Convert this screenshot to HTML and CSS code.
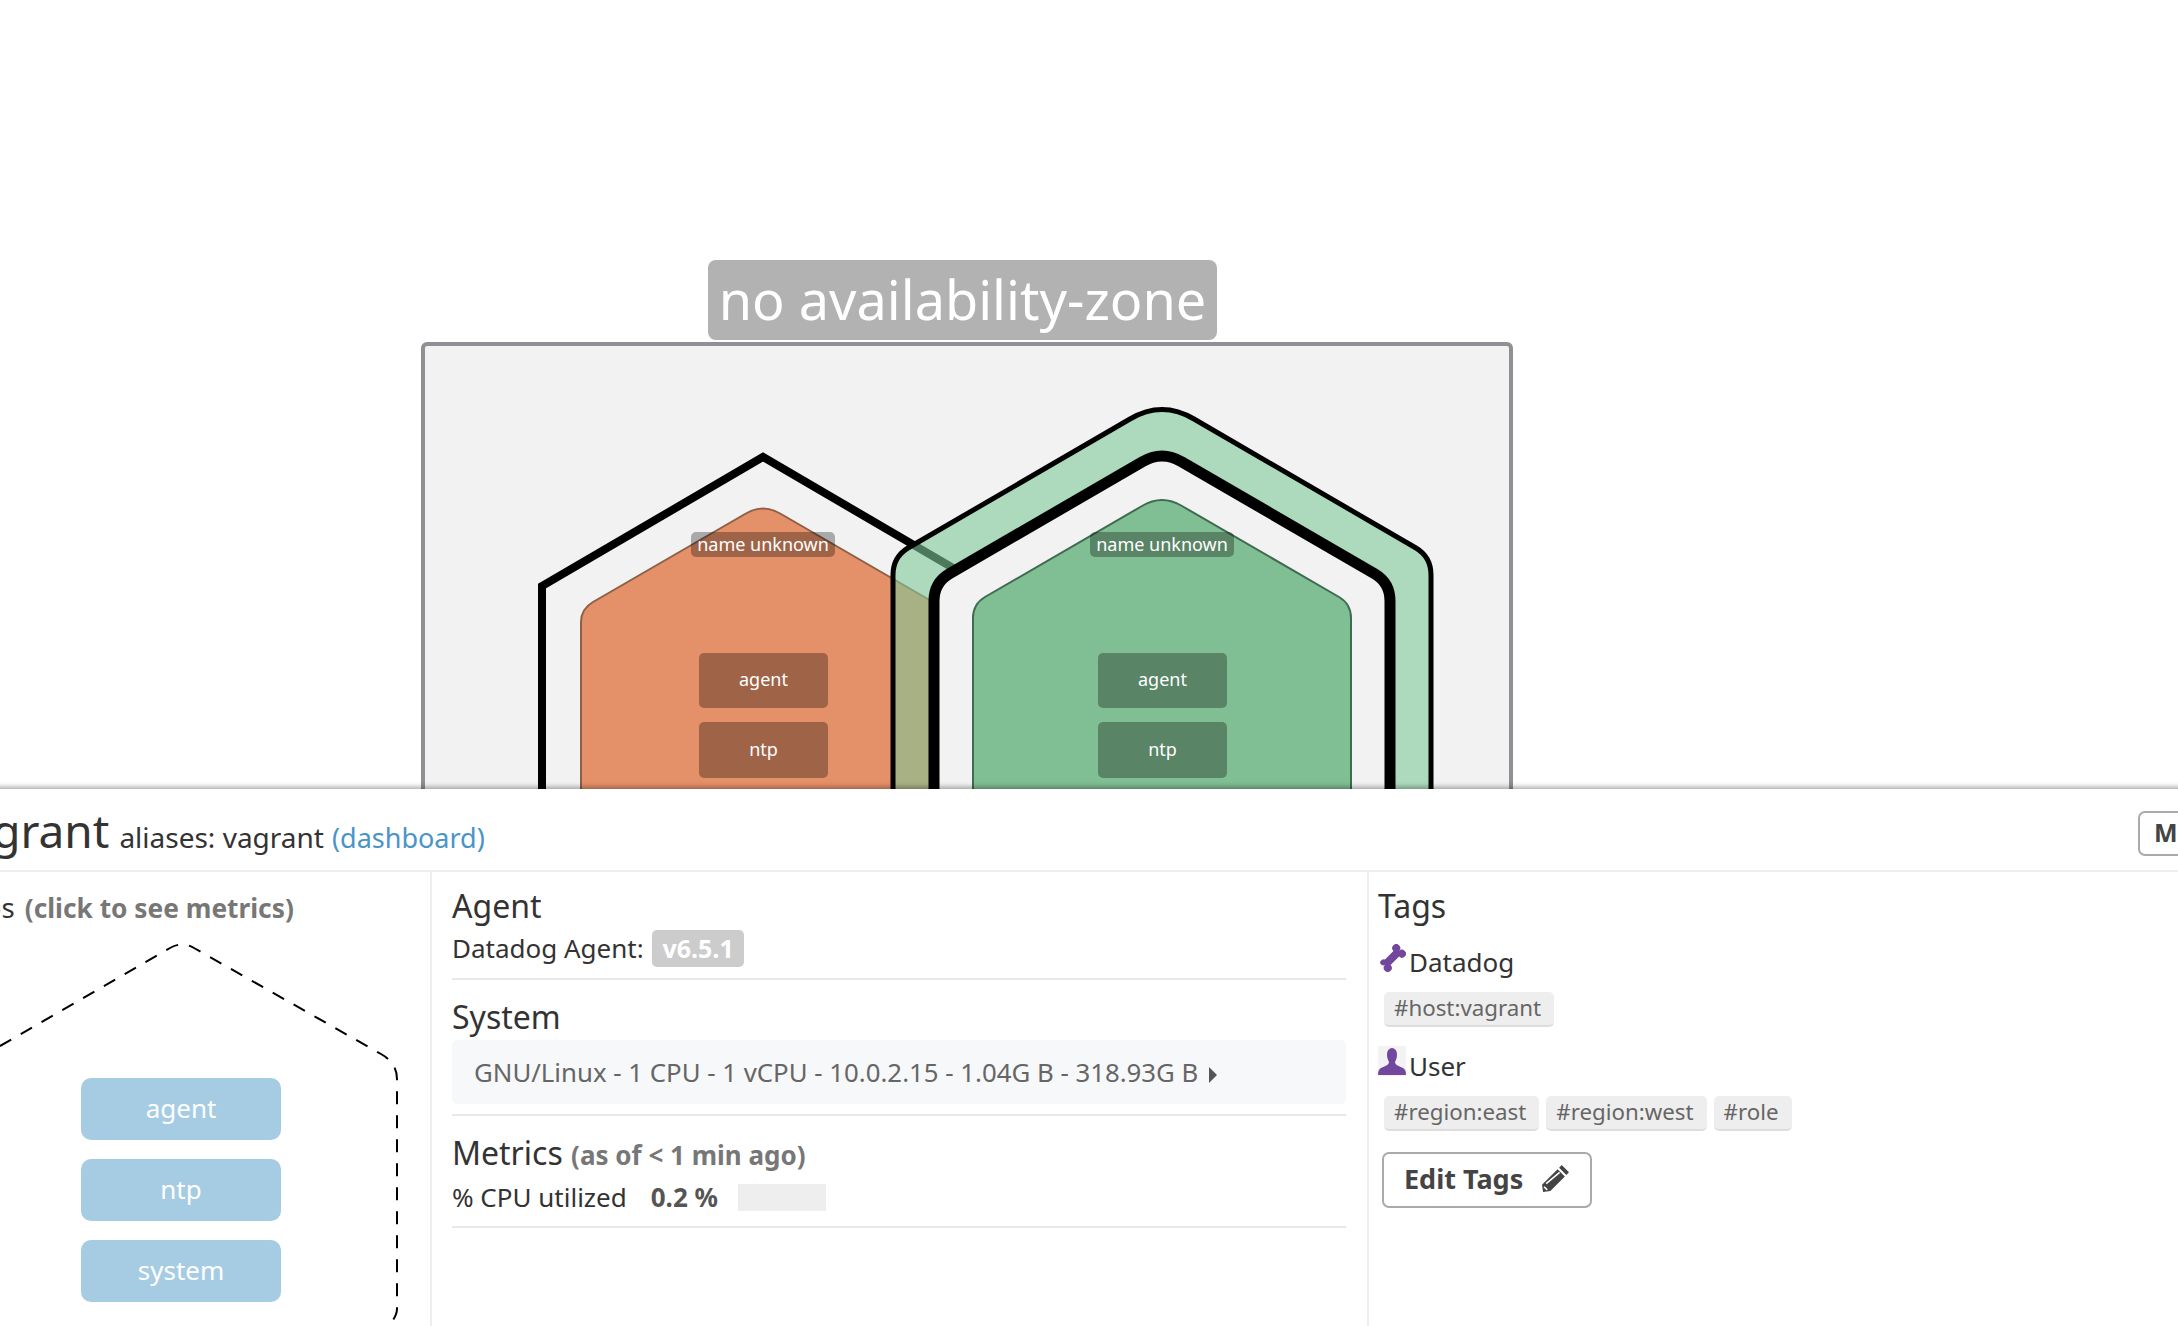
FILE: index.html
```html
<!DOCTYPE html>
<html lang="en">
<head>
    <meta charset="UTF-8">
    <title>Host Map</title>
    <link rel="stylesheet" href="styles.css">
</head>
<body>

    <div class="map">
        <div class="zone-label">no availability-zone</div>
        <div class="zone"></div>

        <svg class="hexes" width="2178" height="800" viewBox="0 0 2178 800">
            <!-- orange host, plain outline -->
            <path class="outline" d="M542 800 V586 L763 457 L984 586 V800"/>
            <path class="fill-orange" d="M581 800 V622 Q581 609 593 602 L745 514 Q763 503 781 514 L933 602 Q945 609 945 622 V800"/>
            <!-- green host, selected -->
            <path class="band" d="M893 800 V575 Q893 557 908 548 L1130 419 Q1162 400 1194 419 L1416 548 Q1431 557 1431 575 V800"/>
            <path class="inner" d="M934 800 V601 Q934 583 949 574 L1142 462 Q1162 450 1182 462 L1375 574 Q1390 583 1390 601 V800"/>
            <path class="fill-green" d="M973 800 V618 Q973 604 985 597 L1142 506 Q1162 494 1182 506 L1339 597 Q1351 604 1351 618 V800"/>
        </svg>

        <div class="host-name host-orange">name unknown</div>
        <div class="app app-one host-orange">agent</div>
        <div class="app app-two host-orange">ntp</div>
        <div class="host-name host-green">name unknown</div>
        <div class="app app-one host-green">agent</div>
        <div class="app app-two host-green">ntp</div>
    </div>

    <div class="panel">
        <div class="panel-header">
            <span class="hostname">vagrant</span>
            <span class="aliases">aliases: vagrant</span>
            <a class="dash-link" href="#">(dashboard)</a>
            <button class="btn btn-mute">Mute Host</button>
        </div>

        <div class="columns">
            <div class="col col-apps">
                <div class="apps-title">Apps <span class="muted">(click to see metrics)</span></div>
                <div class="app-hex">
                    <svg class="app-hex-line" width="432" height="400" viewBox="0 0 432 400">
                        <path d="M1 400 V126 L204 9 Q216 2 228 9 L415 115 Q431 124 431 140 V370 Q431 378 420 390 L405 404"/>
                    </svg>
                    <div class="app-list">
                        <div class="app-big">agent</div>
                        <div class="app-big">ntp</div>
                        <div class="app-big">system</div>
                    </div>
                </div>
            </div>

            <div class="col col-info">
                <section class="info-block block-agent">
                    <h3>Agent</h3>
                    <div class="line">Datadog Agent: <span class="version">v6.5.1</span></div>
                </section>
                <section class="info-block block-system">
                    <h3>System</h3>
                    <div class="sys-box">GNU/Linux - 1 CPU - 1 vCPU - 10.0.2.15 - 1.04G B - 318.93G B <span class="caret"></span></div>
                </section>
                <section class="info-block block-metrics">
                    <h3>Metrics <span class="muted">(as of &lt; 1 min ago)</span></h3>
                    <div class="line metric-line">
                        <span>% CPU utilized</span>
                        <b class="metric-value">0.2 %</b>
                        <span class="metric-bar"></span>
                    </div>
                </section>
            </div>

            <div class="col col-tags">
                <h3>Tags</h3>
                <div class="tag-source source-datadog">
                    <svg width="28" height="28" viewBox="0 0 28 28"><g transform="rotate(-45 14 14)"><path class="purple" d="M2 9 a4 4 0 0 1 6 1 h12 a4 4 0 1 1 4 4 a4 4 0 1 1 -4 4 h-12 a4 4 0 1 1 -4 -4 a4 4 0 0 1 -2 -5z"/></g></svg>
                    <span>Datadog</span>
                </div>
                <div class="tag-row">
                    <span class="tag">#host:vagrant</span>
                </div>
                <div class="tag-source source-user">
                    <svg class="user-icon" width="28" height="30" viewBox="0 0 28 30"><path class="purple" d="M9 8 a5 6 0 0 1 10 0 c0 4 -1 6 -2 8 c0 3 4 4 8 6 c2 1 3 3 3 7 h-28 c0 -4 1 -6 3 -7 c4 -2 8 -3 8 -6 c-1 -2 -2 -4 -2 -8z"/></svg>
                    <span>User</span>
                </div>
                <div class="tag-row">
                    <span class="tag">#region:east</span>
                    <span class="tag">#region:west</span>
                    <span class="tag">#role</span>
                </div>
                <button class="btn btn-edit">Edit Tags
                    <svg width="29" height="29" viewBox="0 0 28 28"><path class="pencil" d="M20 1 L27 8 L24.500 10.500 L17.500 3.500z M16 5 L23 12 L9 26 L2 27 L1 20z"/><path class="pencil-cut" d="M5 19 L18 8 M3 22 L6 25" /></svg>
                </button>
            </div>
        </div>
    </div>

</body>
</html>
```
FILE: styles.css
```css
html, body {
    margin: 0;
    height: 1326px;
    overflow: hidden;
    background: white;
    font-family: "Noto Sans", sans-serif;
    color: #333;
}

/* host map */
.map {
    position: relative;
    height: 789px;
    overflow: hidden;
}
.zone-label {
    position: absolute;
    left: 708px;
    top: 260px;
    width: 509px;
    height: 80px;
    line-height: 78px;
    text-align: center;
    font-size: 54px;
    color: white;
    background: #b2b2b2;
    border-radius: 8px;
}
.zone {
    position: absolute;
    left: 421px;
    top: 342px;
    width: 1084px;
    height: 460px;
    background: #f2f2f2;
    border: 4px solid #8f8f94;
    border-radius: 6px;
}
.hexes {
    position: absolute;
    left: 0;
    top: 0;
}
.outline {
    fill: none;
    stroke: black;
    stroke-width: 8;
}
.fill-orange {
    fill: #e49068;
    stroke: #8d5f48;
    stroke-width: 2;
}
.band {
    fill: #7ec897;
    fill-opacity: 0.6;
    stroke: black;
    stroke-width: 5;
}
.inner {
    fill: #f2f2f2;
    stroke: black;
    stroke-width: 11;
}
.fill-green {
    fill: #80be93;
    stroke: #3f6b50;
    stroke-width: 2;
}
.host-name {
    position: absolute;
    top: 532px;
    width: 144px;
    height: 25px;
    line-height: 25px;
    text-align: center;
    font-size: 18px;
    color: white;
    background: rgba(0, 0, 0, 0.3);
    border-radius: 5px;
}
.app {
    position: absolute;
    width: 129px;
    text-align: center;
    font-size: 18px;
    color: white;
    background: rgba(0, 0, 0, 0.3);
    border-radius: 5px;
}
.app-one {
    top: 653px;
    height: 55px;
    line-height: 53px;
}
.app-two {
    top: 722px;
    height: 56px;
    line-height: 54px;
}
.host-name.host-orange { left: 691px; }
.host-name.host-green { left: 1090px; }
.app.host-orange { left: 699px; }
.app.host-green { left: 1098px; }

/* bottom panel */
.panel {
    position: relative;
    margin: 0 -200px 0 -100px;
    height: 537px;
    background: white;
    box-shadow: 0 -2px 5px rgba(0, 0, 0, 0.35);
}
.panel-header {
    display: flex;
    align-items: baseline;
    height: 70px;
    padding-top: 11px;
    border-bottom: 2px solid #eee;
    padding-left: 43px;
}
.hostname {
    font-size: 46px;
    line-height: 60px;
    margin-right: 10px;
}
.aliases {
    font-size: 28px;
    margin-right: 8px;
}
.dash-link {
    font-size: 27px;
    color: #4a94c9;
    text-decoration: none;
}
.btn {
    font-family: inherit;
    font-weight: bold;
    color: #444;
    background: white;
    border: 2px solid #aaa;
    border-radius: 7px;
}
.btn-mute {
    align-self: flex-start;
    margin: 11px 0 0 auto;
    width: 240px;
    height: 45px;
    font-size: 25px;
    line-height: 36px;
    text-align: left;
    padding: 0 14px 3px;
}

.columns {
    display: flex;
    height: 455px;
}
.col {
    box-sizing: border-box;
    border-right: 2px solid #eee;
}
.col-apps {
    width: 532px;
    padding-top: 17px;
    padding-left: 50px;
}
.col-info {
    width: 937px;
    padding: 0 21px 0 20px;
}
.col-tags {
    border-right: none;
    padding: 0 0 0 9px;
}

h3 {
    margin: 0;
    font-size: 32px;
    font-weight: normal;
    line-height: 44px;
}
.muted {
    font-size: 26px;
    font-weight: bold;
    color: #777;
}
.apps-title {
    font-size: 27.500px;
    line-height: 38px;
    white-space: nowrap;
}
.apps-title .muted {
    margin-left: 3px;
    font-size: 26.300px;
}

.app-hex {
    position: relative;
    margin-left: 15px;
    height: 400px;
}
.app-hex-line {
    position: absolute;
    left: 1px;
    top: 12px;
    overflow: visible;
}
.app-hex-line path {
    fill: none;
    stroke: black;
    stroke-width: 2;
    stroke-dasharray: 13 11;
}
.app-list {
    display: flex;
    flex-direction: column;
    gap: 19px;
    width: 200px;
    margin-left: 116px;
    padding-top: 151px;
}
.app-big {
    height: 62px;
    line-height: 60px;
    text-align: center;
    font-size: 26px;
    color: white;
    background: #a5cce3;
    border-radius: 10px;
}

.info-block {
    border-bottom: 2px solid #e8e8e8;
}
.block-agent {
    padding-top: 12px;
    height: 94px;
}
.block-system {
    padding-top: 15px;
    height: 119px;
}
.block-metrics {
    padding-top: 15px;
    height: 95px;
}
.line {
    font-size: 26px;
    line-height: 40px;
}
.version {
    display: inline-block;
    padding: 0 10px;
    height: 37px;
    line-height: 37px;
    font-size: 25px;
    font-weight: bold;
    color: white;
    background: #ccc;
    border-radius: 5px;
    margin-left: 2px;
}
.sys-box {
    margin-top: 1px;
    height: 64px;
    line-height: 64px;
    padding-left: 22px;
    font-size: 25.800px;
    color: #666;
    background: #f7f8f9;
    border-radius: 5px;
}
.caret {
    display: inline-block;
    margin-left: 4px;
    border-left: 8px solid #555;
    border-top: 8px solid transparent;
    border-bottom: 8px solid transparent;
    vertical-align: -1px;
}
.metric-line {
    display: flex;
    align-items: center;
}
.metric-value {
    color: #555;
    margin-left: 24px;
}
.metric-bar {
    width: 88px;
    height: 27px;
    margin-left: 20px;
    background: #eee;
}

.col-tags h3 {
    padding-top: 12px;
}
.tag-source {
    display: flex;
    align-items: flex-end;
    font-size: 26px;
    line-height: 38px;
}
.tag-source svg {
    margin-right: 3px;
    margin-bottom: 9px;
}
.source-datadog {
    margin-top: 15px;
}
.source-user {
    margin-top: 19px;
}
.user-icon {
    background: #f3f3f3;
}
.purple {
    fill: #74479f;
}
.tag-row {
    display: flex;
    gap: 7px;
    margin: 11px 0 0 6px;
}
.tag {
    padding: 0 13px 0 10px;
    height: 33px;
    line-height: 32px;
    font-size: 22.300px;
    color: #666;
    background: #eee;
    border-bottom: 2px solid #ddd;
    border-radius: 5px;
}
.btn-edit {
    display: flex;
    align-items: center;
    justify-content: space-between;
    box-sizing: border-box;
    width: 210px;
    height: 56px;
    margin: 21px 0 0 4px;
    padding: 0 20px 3px;
    font-size: 27px;
}
.pencil {
    fill: #444;
}
.pencil-cut {
    fill: none;
    stroke: white;
    stroke-width: 1.500;
}
```
